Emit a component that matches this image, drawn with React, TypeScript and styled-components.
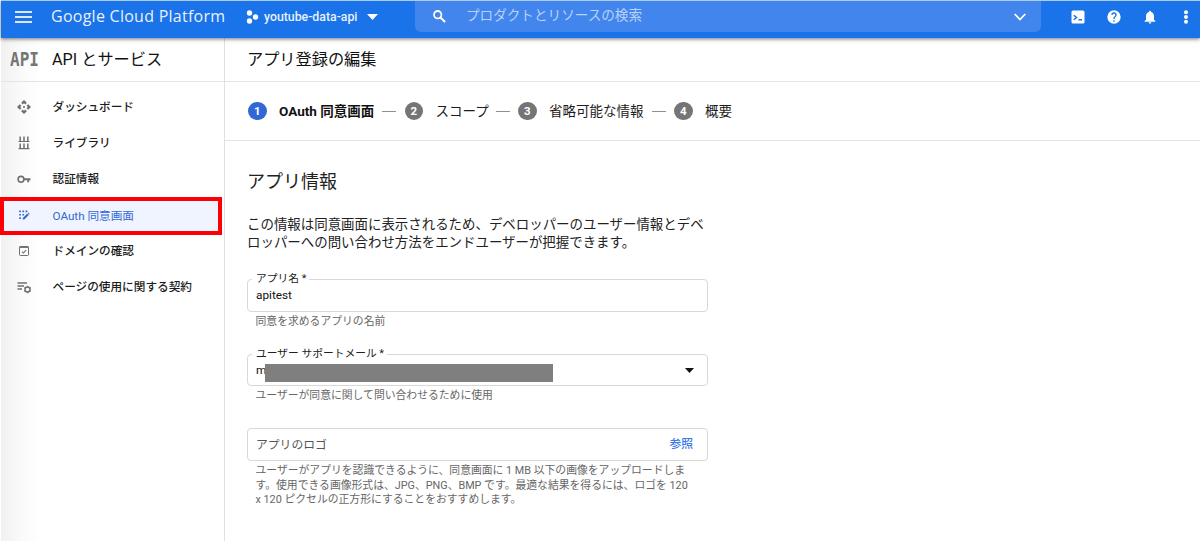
import React from "react";
import styled, { createGlobalStyle } from "styled-components";

const GlobalStyle = createGlobalStyle`
  * { box-sizing: border-box; }
  body { margin: 0; background: #fff; font-family: Roboto, "Noto Sans CJK JP", sans-serif; color: #212121; }
`;

const Page = styled.div`
  height: 541px;
  display: flex;
  flex-direction: column;
  overflow: hidden;
  padding-left: 1px;
  background: #fff;
`;

const TopBar = styled.header`
  height: 38px;
  flex: none;
  display: flex;
  align-items: flex-start;
  background: #1a73e8;
  border-top: 1px solid #a9cbf6;
  box-shadow: 0 1px 4px rgba(0, 0, 0, 0.55);
  color: #fff;
  position: relative;
  z-index: 2;
`;

const MenuIcon = styled.svg`
  width: 17px;
  height: 12px;
  margin: 10px 19px 0 14px;
  fill: #dbe8fb;
`;

const Brand = styled.div`
  width: 195px;
  height: 32px;
  line-height: 31px;
  font-family: "Open Sans", sans-serif;
  font-size: 16px;
  font-weight: 500;
  letter-spacing: 0.26px;
  white-space: nowrap;
  color: #e8f1fd;
`;

const Project = styled.div`
  display: flex;
  align-items: center;
  height: 32px;
  width: 169px;
  font-size: 12.3px;
  font-weight: 500;
  color: #e8f1fd;
`;

const ProjectName = styled.span`
  width: 94px;
  margin: 0 9px 0 5px;
  white-space: nowrap;
`;

const Search = styled.div`
  display: flex;
  align-items: center;
  width: 626px;
  height: 31px;
  padding: 0 15px 0 18px;
  border-radius: 0 0 6px 6px;
  background: #4285ec;
`;

const SearchText = styled.span`
  flex: 1;
  margin: -5px 0 0 20px;
  font-size: 13.6px;
  color: #b9d2f9;
`;

const Actions = styled.div`
  display: flex;
  align-items: center;
  height: 31px;
  margin-left: 29px;
  gap: 20px;
`;

const Body = styled.div`
  flex: 1;
  display: flex;
  min-height: 0;
`;

const Sidebar = styled.nav`
  width: 224px;
  flex: none;
  border-right: 1px solid #e0e0e0;
  background: linear-gradient(90deg, #f1f1f1 0, #fafafa 20px, #fff 42px);
`;

const SideHeader = styled.div`
  height: 44px;
  display: flex;
  align-items: center;
  border-bottom: 1px solid #e4e4e4;
  padding-left: 9px;
`;

const ApiMark = styled.span`
  width: 29px;
  font-family: "DejaVu Sans Mono", monospace;
  font-size: 16px;
  font-weight: 700;
  line-height: 16px;
  color: #757575;
  transform: scaleY(1.16);
`;

const SideTitle = styled.span`
  margin: 0 0 4px 13px;
  font-size: 16.2px;
  color: #111;
`;

const NavList = styled.div`
  padding-top: 7px;
`;

const NavItem = styled.div<{ $active?: boolean }>`
  height: 36px;
  display: flex;
  align-items: center;
  padding-left: 15px;
  font-size: 11.65px;
  color: ${(p) => (p.$active ? "#3367d6" : "#1c1c1c")};
  svg { flex: none; color: ${(p) => (p.$active ? "#3367d6" : "#707070")}; }
  ${(p) => p.$active && `
    height: 38px;
    margin: 0 2px -2px -1px;
    padding: 0 0 2px 12px;
    border: 4px solid #fb0007;
    background: #eff4fe;
  `}
`;

const NavLabel = styled.span<{ $active?: boolean }>`
  margin: 0 0 ${(p) => (p.$active ? 2 : 4)}px 20.5px;
  white-space: nowrap;
  font-weight: ${(p) => (p.$active ? 400 : 450)};
`;

const Main = styled.main`
  flex: 1;
`;

const TitleBar = styled.div`
  height: 44px;
  line-height: 43px;
  padding-left: 22px;
  border-bottom: 1px solid #e4e4e4;
  font-size: 16.2px;
  color: #111;
`;

const Stepper = styled.div`
  height: 59px;
  display: flex;
  align-items: center;
  padding-left: 23px;
  border-bottom: 1px solid #e4e4e4;
`;

const Badge = styled.span<{ $active?: boolean }>`
  width: 18.5px;
  height: 18.5px;
  border-radius: 50%;
  background: ${(p) => (p.$active ? "#3367d6" : "#757575")};
  color: #fff;
  font-size: 11.5px;
  font-weight: 700;
  line-height: 18.5px;
  text-align: center;
`;

const StepLabel = styled.span<{ $active?: boolean; $width: number }>`
  width: ${(p) => p.$width}px;
  margin: 0 0 3px 12.5px;
  font-size: 13.5px;
  font-weight: ${(p) => (p.$active ? 700 : 400)};
  white-space: nowrap;
  color: ${(p) => (p.$active ? "#111" : "#1c1c1c")};
`;

const Dash = styled.span`
  width: 14px;
  height: 1px;
  margin: 0 8.5px 0 8px;
  background: #909090;
`;

const Form = styled.section`
  width: 483px;
  padding: 28px 0 0 22px;
`;

const Heading = styled.h2`
  margin: 0;
  height: 28px;
  line-height: 26px;
  font-size: 18px;
  font-weight: 400;
`;

const Intro = styled.p`
  margin: 19px 0 27px;
  font-size: 13.44px;
  line-height: 18px;
  white-space: nowrap;
`;

const Field = styled.div<{ $height?: number }>`
  position: relative;
  display: flex;
  align-items: center;
  justify-content: space-between;
  width: 461px;
  height: ${(p) => p.$height ?? 33}px;
  padding: 0 13px 0 8px;
  border: 1px solid #d8d8d8;
  border-radius: 4px;
  font-size: 11.8px;
`;

const FloatLabel = styled.span`
  position: absolute;
  top: -9px;
  left: 4px;
  padding: 0 3px 0 4px;
  background: #fff;
  font-size: 10.75px;
  line-height: 15px;
`;

const Value = styled.span`
  margin-bottom: 1px;
  color: #111;
`;

const Placeholder = styled.span`
  margin-bottom: 3px;
  color: #555;
`;

const Browse = styled.span`
  margin: 0 1px 4px 0;
  font-weight: 500;
  color: #3b78e7;
`;

const Redaction = styled.span`
  position: absolute;
  left: 17px;
  top: 9px;
  width: 288px;
  height: 18px;
  background: #7f7f7f;
`;

const Hint = styled.p`
  margin: 3px 0 24.5px 8.500px;
  font-size: 10.82px;
  line-height: 14.5px;
  white-space: nowrap;
  color: #666;
`;

const Icon = ({ d, size = 16 }: { d: string; size?: number }) => (
  <svg width={size} height={size} viewBox="0 0 24 24" fill="currentColor">
    <path d={d} fillRule="evenodd" />
  </svg>
);

const DashboardIcon = () => (
  <svg width="16" height="16" viewBox="0 0 16 16" fill="currentColor">
    <path d="M8 1L10.800 3.800 9.300 5.500 8 4.200 6.700 5.500 5.200 3.800zM8 15L10.800 12.200 9.300 10.500 8 11.800 6.700 10.500 5.200 12.200zM1 8L3.800 5.200 5.500 6.700 4.200 8 5.500 9.300 3.800 10.800zM15 8L12.200 5.200 10.500 6.700 11.800 8 10.500 9.300 12.200 10.800z" />
    <circle cx="8" cy="8" r="1.100" />
  </svg>
);

const LibraryIcon = () => (
  <svg width="16" height="16" viewBox="0 0 16 16" stroke="currentColor" fill="none">
    <path strokeWidth="1.500" d="M4.200 1.500v5M8 1.500v5M11.800 1.500v5M4.200 8.500v5M8 8.500v5M11.800 8.500v5" />
    <path strokeWidth="1.200" d="M2.500 6.500h11M2.500 13.700h11" />
  </svg>
);

const KeyIcon = () => (
  <svg width="16" height="16" viewBox="0 0 16 16" stroke="currentColor" fill="none">
    <circle cx="5" cy="8.300" r="2.900" strokeWidth="1.600" />
    <path strokeWidth="1.900" d="M7.800 8.300h6.700M12.200 8.300v3" />
  </svg>
);

const ConsentIcon = () => (
  <svg width="16" height="16" viewBox="0 0 16 16" fill="currentColor">
    <path d="M3.200 3.500h1.700v1.700H3.200zM6.400 3.500h1.700v1.700H6.400zM9.600 3.500h1.700v1.700H9.600zM3.200 6.900h1.700v1.700H3.200zM6.400 6.900h1.700v1.700H6.400zM3.200 10.300h1.700V12H3.200zM6.800 12.600v-1.500l4.300-4.300 1.500 1.500-4.300 4.300zM11.500 6.300l.7-.7 1.500 1.500-.7.7z" />
  </svg>
);

const DomainIcon = () => (
  <svg width="16" height="16" viewBox="0 0 16 16" stroke="currentColor" fill="none">
    <rect x="3.500" y="3.500" width="9" height="9" rx=".8" strokeWidth="1" />
    <path strokeWidth="1.500" d="M3.500 4.200h9" />
    <path strokeWidth="1.100" d="M6 8.700l1.400 1.300 2.700-2.900" />
  </svg>
);

const AgreementIcon = () => (
  <svg width="16" height="16" viewBox="0 0 16 16" stroke="currentColor" fill="none">
    <path strokeWidth="1.300" d="M1.500 4h9.500M1.500 7h6.500M1.500 10h4.500" />
    <circle cx="11.500" cy="10.500" r="2.500" strokeWidth="1.400" />
    <path strokeWidth="1.300" d="M11.500 6.800v1.400M11.500 12.800v1.400M8.300 8.600l1.200.7M13.500 11.700l1.200.7M8.300 12.400l1.200-.7M13.500 9.300l1.200-.7" />
  </svg>
);

const navItems = [
  { label: "ダッシュボード", icon: <DashboardIcon /> },
  { label: "ライブラリ", icon: <LibraryIcon /> },
  { label: "認証情報", icon: <KeyIcon /> },
  { label: "OAuth 同意画面", icon: <ConsentIcon />, active: true },
  { label: "ドメインの確認", icon: <DomainIcon /> },
  { label: "ページの使用に関する契約", icon: <AgreementIcon /> },
];

const steps = [
  { label: "OAuth 同意画面", width: 95, active: true },
  { label: "スコープ", width: 52 },
  { label: "省略可能な情報", width: 94.5 },
  { label: "概要", width: 30 },
];

export default function App() {
  return (
    <>
      <GlobalStyle />
      <Page>
        <TopBar>
          <MenuIcon viewBox="0 0 17 12">
            <path d="M0 0h17v2H0zM0 5h17v2H0zM0 10h17v2H0z" />
          </MenuIcon>
          <Brand>Google Cloud Platform</Brand>
          <Project>
            <svg width="13" height="14" fill="#fff">
              <circle cx="3.500" cy="3" r="2.700" />
              <circle cx="3.500" cy="11" r="2.700" />
              <circle cx="9.500" cy="7" r="2.700" />
            </svg>
            <ProjectName>youtube-data-api</ProjectName>
            <svg width="11" height="6" fill="#fff"><path d="M0 0h11L5.500 6z" /></svg>
          </Project>
          <Search>
            <svg width="13" height="13" viewBox="0 0 13 13" fill="none" stroke="#fff">
              <circle cx="4.700" cy="4.700" r="3.700" strokeWidth="1.800" />
              <path d="M7.400 7.400l4.700 4.700" strokeWidth="2.100" />
            </svg>
            <SearchText>プロダクトとリソースの検索</SearchText>
            <svg width="12" height="8" fill="none" stroke="#fff" strokeWidth="1.800"><path d="M.7 1L6 6.500 11.300 1" /></svg>
          </Search>
          <Actions>
            <svg width="16" height="16" viewBox="0 0 16 16">
              <rect x="1.500" y="1.500" width="13" height="13" rx="1.500" fill="#fff" />
              <path d="M3.800 6.200l2.700 2.300-2.700 2.300M8.500 10.800h3.500" fill="none" stroke="#1a73e8" strokeWidth="1.500" />
            </svg>
            <Icon d="M12 2a10 10 0 1 0 0 20 10 10 0 0 0 0-20zm1 17h-2v-2h2zm2.070-7.750l-.9.920C13.450 12.900 13 13.500 13 15h-2v-.5c0-1.100.450-2.100 1.170-2.830l1.240-1.260c.370-.36.590-.86.590-1.410a2 2 0 0 0-4 0H8a4 4 0 1 1 8 0c0 .88-.36 1.680-.93 2.250z" />
            <Icon d="M12 22c1.100 0 2-.9 2-2h-4a2 2 0 0 0 2 2zm6-6v-5c0-3.070-1.640-5.640-4.500-6.320V4a1.500 1.500 0 0 0-3 0v.68C7.630 5.360 6 7.920 6 11v5l-2 2v1h16v-1z" />
            <svg width="16" height="16" fill="#fff">
              <circle cx="8" cy="3.200" r="2" />
              <circle cx="8" cy="8" r="2" />
              <circle cx="8" cy="12.800" r="2" />
            </svg>
          </Actions>
        </TopBar>
        <Body>
          <Sidebar>
            <SideHeader>
              <ApiMark>API</ApiMark>
              <SideTitle>API とサービス</SideTitle>
            </SideHeader>
            <NavList>
              {navItems.map((item) => (
                <NavItem key={item.label} $active={item.active}>
                  {item.icon}
                  <NavLabel $active={item.active}>{item.label}</NavLabel>
                </NavItem>
              ))}
            </NavList>
          </Sidebar>
          <Main>
            <TitleBar>アプリ登録の編集</TitleBar>
            <Stepper>
              {steps.map((step, i) => (
                <React.Fragment key={step.label}>
                  {i > 0 && <Dash />}
                  <Badge $active={step.active}>{i + 1}</Badge>
                  <StepLabel $active={step.active} $width={step.width}>{step.label}</StepLabel>
                </React.Fragment>
              ))}
            </Stepper>
            <Form>
              <Heading>アプリ情報</Heading>
              <Intro>
                この情報は同意画面に表示されるため、デベロッパーのユーザー情報とデベ<br />
                ロッパーへの問い合わせ方法をエンドユーザーが把握できます。
              </Intro>
              <Field>
                <FloatLabel>アプリ名 *</FloatLabel>
                <Value>apitest</Value>
              </Field>
              <Hint>同意を求めるアプリの名前</Hint>
              <Field $height={32}>
                <FloatLabel>ユーザー サポートメール *</FloatLabel>
                <Value>m</Value>
                <Redaction />
                <svg width="9" height="5" fill="#111"><path d="M0 0h9L4.500 5z" /></svg>
              </Field>
              <Hint>ユーザーが同意に関して問い合わせるために使用</Hint>
              <Field>
                <Placeholder>アプリのロゴ</Placeholder>
                <Browse>参照</Browse>
              </Field>
              <Hint>
                ユーザーがアプリを認識できるように、同意画面に 1 MB 以下の画像をアップロードしま<br />
                す。使用できる画像形式は、JPG、PNG、BMP です。最適な結果を得るには、ロゴを 120<br />
                x 120 ピクセルの正方形にすることをおすすめします。
              </Hint>
            </Form>
          </Main>
        </Body>
      </Page>
    </>
  );
}
